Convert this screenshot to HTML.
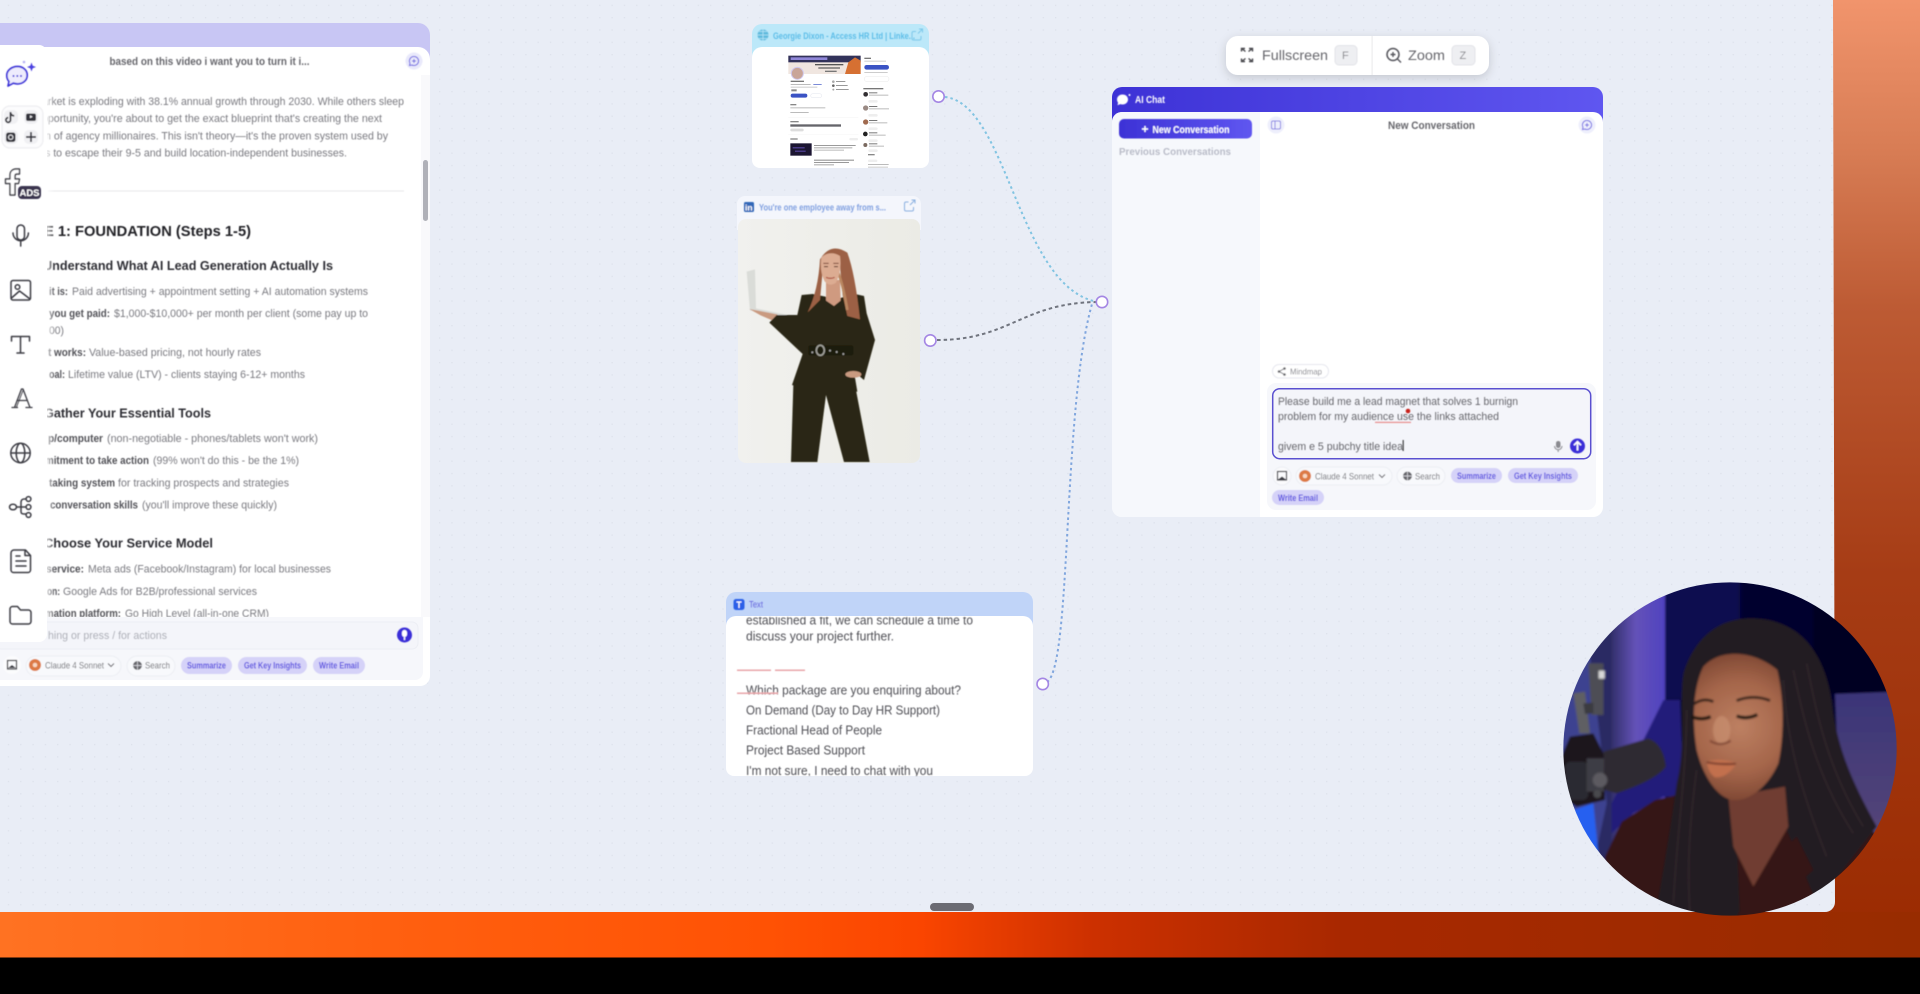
<!DOCTYPE html>
<html lang="en">
<head>
<meta charset="utf-8">
<title>AI Canvas</title>
<style>
html,body{margin:0;padding:0;background:#000;width:1920px;height:994px;overflow:hidden}
svg{display:block}
text{font-family:"Liberation Sans",sans-serif;white-space:pre}
.r{font-size:11px;fill:#7a7a80}
.b{font-size:11px;fill:#525258;font-weight:700}
.h{font-size:12.5px;fill:#2f2f34;font-weight:700}
.c{font-size:9px;fill:#6f6f75}
.p{font-size:9px;fill:#5a4fe0;font-weight:700}
.t{font-size:12.5px;fill:#4f4f55}
.i{font-size:11px;fill:#66666c}
.ic{fill:none;stroke:#3c3c44;stroke-width:1.5;stroke-linecap:round;stroke-linejoin:round}
.soft{filter:url(#s)}
</style>
</head>
<body>
<svg width="1920" height="994" viewBox="0 0 1920 994" xmlns="http://www.w3.org/2000/svg">
<defs>
<filter id="s" x="-5%" y="-5%" width="110%" height="110%"><feGaussianBlur stdDeviation="0.4"/></filter>
<filter id="s3" x="-20%" y="-20%" width="140%" height="140%"><feGaussianBlur stdDeviation="5"/></filter>
<filter id="s4" filterUnits="userSpaceOnUse" x="0" y="0" width="1140" height="1100"><feGaussianBlur stdDeviation="3"/></filter>
<filter id="s5" filterUnits="userSpaceOnUse" x="0" y="100" width="600" height="740"><feGaussianBlur stdDeviation="1.500"/></filter>
<filter id="sh" x="-10%" y="-30%" width="120%" height="170%"><feDropShadow dx="0" dy="3" stdDeviation="5" flood-color="#000" flood-opacity=".16"/></filter>
<pattern id="dots" x="7.8" y="4.7" width="12.32" height="12.32" patternUnits="userSpaceOnUse"><rect x="0" y="0" width="1.300" height="1.300" fill="#dde1eb"/></pattern>
<linearGradient id="side" x1="0" y1="0" x2="0" y2="1"><stop offset="0" stop-color="#f1946c"/><stop offset=".16" stop-color="#d77c54"/><stop offset=".32" stop-color="#bd5b34"/><stop offset=".6" stop-color="#a63c15"/><stop offset="1" stop-color="#9a2a00"/></linearGradient>
<linearGradient id="strip" x1="0" y1="0" x2="1920" y2="0" gradientUnits="userSpaceOnUse"><stop offset="0" stop-color="#ff7222"/><stop offset=".2" stop-color="#ff6010"/><stop offset=".4" stop-color="#ff5204"/><stop offset=".48" stop-color="#fa4500"/><stop offset=".57" stop-color="#cc3000"/><stop offset=".7" stop-color="#a82800"/><stop offset="1" stop-color="#982c00"/></linearGradient>
<linearGradient id="chat" x1="0" x2="1"><stop offset="0" stop-color="#3d32d6"/><stop offset="1" stop-color="#5f56f0"/></linearGradient>
<linearGradient id="fade" x1="0" x2="1"><stop offset="0" stop-color="#fff" stop-opacity=".7"/><stop offset="1" stop-color="#fff" stop-opacity="0"/></linearGradient>
<linearGradient id="wall" x1="0" x2="1"><stop offset="0" stop-color="#f1f1ee"/><stop offset="1" stop-color="#ebebe5"/></linearGradient>
<linearGradient id="panel" x1="0" x2="1"><stop offset="0" stop-color="#33306c"/><stop offset=".45" stop-color="#6452b8"/><stop offset="1" stop-color="#4f42c0"/></linearGradient>
<linearGradient id="wallr" x1="0" y1="0" x2="0" y2="1"><stop offset="0" stop-color="#3a3578"/><stop offset="1" stop-color="#564678"/></linearGradient>
<radialGradient id="face" gradientUnits="userSpaceOnUse" cx="600" cy="470" r="230"><stop offset="0" stop-color="#bd8062"/><stop offset=".6" stop-color="#a4654a"/><stop offset="1" stop-color="#7c4632"/></radialGradient>
<clipPath id="leftclip"><rect x="0" y="75" width="421" height="542"/></clipPath>
<clipPath id="textclip"><path d="M726 617h307v151a8 8 0 0 1-8 8H734a8 8 0 0 1-8-8z"/></clipPath>
<clipPath id="cam"><circle cx="570" cy="537" r="500"/></clipPath>
</defs>

<!-- backdrop -->
<rect width="1920" height="957" fill="url(#side)"/>
<rect x="0" y="912" width="1920" height="45.500" fill="url(#strip)"/>
<rect x="0" y="957.500" width="1920" height="37" fill="#000"/>
<!-- canvas -->
<path d="M0 0H1833L1835 902a10 10 0 0 1-10 10H0z" fill="#e9edf6"/>
<path d="M0 0H1833L1835 902a10 10 0 0 1-10 10H0z" fill="url(#dots)"/>
<rect x="930" y="903" width="44" height="8" rx="4" fill="#6b6b73"/>

<!-- left panel -->
<g>
<path d="M0 23H418a12 12 0 0 1 12 12V60H0z" fill="#c8c6f4"/>
<path d="M0 47H418a12 12 0 0 1 12 12V676a10 10 0 0 1-10 10H0z" fill="#fff"/>
<rect x="421" y="75" width="9" height="542" fill="#f9f9fb"/>
<rect x="423" y="160" width="5" height="61" rx="2.500" fill="#b0b1b8"/>
<g class="soft">
<text x="109.500" y="65" textLength="200" lengthAdjust="spacingAndGlyphs" style="font-size:11px;font-weight:700;fill:#66666c">based on this video i want you to turn it i...</text>
<circle cx="414" cy="61" r="8.500" fill="#e9e9fb"/>
<path d="M414 56.500a4.500 4.500 0 1 1-2 8.500l-2.500.5.500-2.300a4.500 4.500 0 0 1 4-6.700zM414 59v4M412 61h4" fill="none" stroke="#6a60e0" stroke-width="1"/>
<g clip-path="url(#leftclip)">
<text class="r" x="42" y="105" textLength="362" lengthAdjust="spacingAndGlyphs">arket is exploding with 38.1% annual growth through 2030. While others sleep</text>
<text class="r" x="36" y="122" textLength="346" lengthAdjust="spacingAndGlyphs">opportunity, you're about to get the exact blueprint that's creating the next</text>
<text class="r" x="45" y="139.500" textLength="343" lengthAdjust="spacingAndGlyphs">n of agency millionaires. This isn't theory—it's the proven system used by</text>
<text class="r" x="45" y="156.500" textLength="302" lengthAdjust="spacingAndGlyphs">s to escape their 9-5 and build location-independent businesses.</text>
<rect x="48" y="190.500" width="356" height="1" fill="#e6e6e9"/>
<text x="44" y="236" textLength="207" lengthAdjust="spacingAndGlyphs" style="font-size:14.500px;font-weight:700;fill:#222227">E 1: FOUNDATION (Steps 1-5)</text>
<text class="h" x="43" y="270" textLength="290" lengthAdjust="spacingAndGlyphs">Understand What AI Lead Generation Actually Is</text>

<text class="b" x="49" y="295" textLength="19" lengthAdjust="spacingAndGlyphs">it is:</text>
<text class="r" x="72" y="295" textLength="296" lengthAdjust="spacingAndGlyphs">Paid advertising + appointment setting + AI automation systems</text>
<text class="b" x="49" y="317" textLength="61" lengthAdjust="spacingAndGlyphs">you get paid:</text>
<text class="r" x="114" y="317" textLength="254" lengthAdjust="spacingAndGlyphs">$1,000-$10,000+ per month per client (some pay up to</text>
<text class="r" x="49" y="334" textLength="15" lengthAdjust="spacingAndGlyphs">00)</text>
<text class="b" x="48" y="356" textLength="38" lengthAdjust="spacingAndGlyphs">t works:</text>
<text class="r" x="89" y="356" textLength="172" lengthAdjust="spacingAndGlyphs">Value-based pricing, not hourly rates</text>
<text class="b" x="49" y="378" textLength="16" lengthAdjust="spacingAndGlyphs">oal:</text>
<text class="r" x="68" y="378" textLength="237" lengthAdjust="spacingAndGlyphs">Lifetime value (LTV) - clients staying 6-12+ months</text>

<text class="h" x="44" y="417.500" textLength="167" lengthAdjust="spacingAndGlyphs">Gather Your Essential Tools</text>
<text class="b" x="48" y="442" textLength="55" lengthAdjust="spacingAndGlyphs">p/computer</text>
<text class="r" x="107" y="442" textLength="211" lengthAdjust="spacingAndGlyphs">(non-negotiable - phones/tablets won't work)</text>
<text class="b" x="45" y="464" textLength="104" lengthAdjust="spacingAndGlyphs">mitment to take action</text>
<text class="r" x="153" y="464" textLength="146" lengthAdjust="spacingAndGlyphs">(99% won't do this - be the 1%)</text>
<text class="b" x="49" y="486.500" textLength="66" lengthAdjust="spacingAndGlyphs">taking system</text>
<text class="r" x="118" y="486.500" textLength="171" lengthAdjust="spacingAndGlyphs">for tracking prospects and strategies</text>
<text class="b" x="50" y="508.500" textLength="88" lengthAdjust="spacingAndGlyphs">conversation skills</text>
<text class="r" x="142" y="508.500" textLength="135" lengthAdjust="spacingAndGlyphs">(you'll improve these quickly)</text>

<text class="h" x="44" y="547.500" textLength="169" lengthAdjust="spacingAndGlyphs">Choose Your Service Model</text>
<text class="b" x="46" y="572.500" textLength="38" lengthAdjust="spacingAndGlyphs">service:</text>
<text class="r" x="88" y="572.500" textLength="243" lengthAdjust="spacingAndGlyphs">Meta ads (Facebook/Instagram) for local businesses</text>
<text class="b" x="47" y="595" textLength="13" lengthAdjust="spacingAndGlyphs">on:</text>
<text class="r" x="63" y="595" textLength="194" lengthAdjust="spacingAndGlyphs">Google Ads for B2B/professional services</text>
<text class="b" x="45" y="617" textLength="76" lengthAdjust="spacingAndGlyphs">mation platform:</text>
<text class="r" x="125" y="617" textLength="144" lengthAdjust="spacingAndGlyphs">Go High Level (all-in-one CRM)</text>
</g>
</g>
<!-- left composer -->
<path d="M0 617H423V672a8 8 0 0 1-8 8H0z" fill="#f6f7fb"/>
<rect x="-5" y="622" width="423" height="27" rx="6" fill="#f4f5fa" stroke="#eceef4"/>
<g class="soft">
<text x="48" y="639" textLength="119" lengthAdjust="spacingAndGlyphs" style="font-size:11px;fill:#aeb0b8">hing or press / for actions</text>
<circle cx="404.500" cy="635" r="7.500" fill="#3a2fd8"/>
<rect x="402" y="630" width="5" height="7" rx="2.500" fill="#fff"/>
<path d="M404.500 637v3" stroke="#fff" stroke-width="1.400"/>
<circle cx="12" cy="665" r="9" fill="#fff" opacity=".6"/>
<rect x="7.500" y="660.500" width="9" height="8.500" fill="none" stroke="#3c3c44" stroke-width="1.200"/>
<path d="M8 668l4-3 4 3z" fill="#3c3c44"/>
<rect x="26" y="656" width="95" height="20" rx="10" fill="#f8f9fc" stroke="#eceef3"/>
<circle cx="35" cy="665" r="6" fill="#dd7a45"/><circle cx="35" cy="665" r="2.300" fill="#f7d7c2"/>
<text class="c" x="45" y="668.500" textLength="59" lengthAdjust="spacingAndGlyphs">Claude 4 Sonnet</text>
<path d="M108 663.500l3 3 3-3" fill="none" stroke="#66666c" stroke-width="1.100"/>
<rect x="127" y="656" width="48" height="20" rx="10" fill="#f8f9fc" stroke="#eceef3"/>
<circle cx="137.500" cy="665.500" r="4.500" fill="#66666c"/>
<path d="M133 665.500h9M137.500 661v9" stroke="#e8e8ee" stroke-width=".7"/>
<text class="c" x="145" y="668.500" textLength="25" lengthAdjust="spacingAndGlyphs">Search</text>
<rect x="181" y="657" width="51" height="17" rx="8.500" fill="#d5d2f8"/>
<text class="p" x="187" y="668.500" textLength="39" lengthAdjust="spacingAndGlyphs">Summarize</text>
<rect x="238" y="657" width="69" height="17" rx="8.500" fill="#d5d2f8"/>
<text class="p" x="244" y="668.500" textLength="57" lengthAdjust="spacingAndGlyphs">Get Key Insights</text>
<rect x="313" y="657" width="52" height="17" rx="8.500" fill="#d5d2f8"/>
<text class="p" x="319" y="668.500" textLength="40" lengthAdjust="spacingAndGlyphs">Write Email</text>
</g>
</g>

<!-- left toolbar -->
<g>
<rect x="47" y="47" width="8" height="570" fill="url(#fade)"/>
<path d="M0 45H39a8 8 0 0 1 8 8V634a8 8 0 0 1-8 8H0z" fill="#fff"/>
<g class="soft">
<path d="M17.500 66.500c5.500 0 9.700 3.700 9.700 8.700s-4.200 8.700-9.700 8.700c-1.500 0-2.900-.3-4.200-.8L8 86l1-4.500c-1.400-1.600-2.200-3.700-2.200-6.100 0-5 5-8.900 10.700-8.900z" fill="#eeecfd" stroke="#3b30d8" stroke-width="1.700" stroke-linejoin="round"/>
<circle cx="13.500" cy="76" r="1" fill="#3b30d8"/><circle cx="17.300" cy="76" r="1" fill="#3b30d8"/><circle cx="21" cy="76" r="1" fill="#3b30d8"/>
<path d="M31.500 62.500l1.200 3.300 3.300 1.200-3.300 1.200-1.200 3.300-1.200-3.300-3.300-1.200 3.300-1.200z" fill="#4a3fe0"/>
<circle cx="24" cy="62" r="1.300" fill="#b8b2f4"/>

<rect x="2" y="106" width="41" height="42" rx="8" fill="#fcfcfd" stroke="#eeeef1" stroke-width="1.200"/>
<rect x="4" y="110" width="14" height="14" rx="5" fill="#f0f0f3"/>
<rect x="24" y="110" width="14" height="14" rx="5" fill="#f0f0f3"/>
<rect x="4" y="130" width="14" height="14" rx="5" fill="#f0f0f3"/>
<rect x="24" y="130" width="14" height="14" rx="5" fill="#f0f0f3"/>
<path d="M10.500 112v8a2.300 2.300 0 1 1-2.300-2.300M10.500 112.500c.3 2 1.700 3.200 3.700 3.400" fill="none" stroke="#34343c" stroke-width="1.800"/>
<rect x="26" y="113.500" width="10" height="7.500" rx="2" fill="#34343c"/><path d="M30 115.300l2.700 1.500-2.700 1.500z" fill="#f0f0f3"/>
<rect x="6" y="132.500" width="9.500" height="9.500" rx="2.500" fill="#34343c"/><circle cx="10.700" cy="137.200" r="2.200" fill="none" stroke="#f0f0f3" stroke-width="1"/>
<path d="M26 137h10M31 132v10" stroke="#34343c" stroke-width="1.700"/>

<path d="M19.500 169h-3.500c-3.500 0-6 2.500-6 6v4H5.500v4.500H10V195h5v-11.500h3.500l1-4.500H15v-3c0-1.200.8-2 2-2h2.500z" fill="#fff" stroke="#3c3c44" stroke-width="1.400" stroke-linejoin="round"/>
<rect x="18" y="186" width="23" height="13" rx="4" fill="#3a3450"/>
<text x="19.500" y="196" textLength="20" lengthAdjust="spacingAndGlyphs" style="font-size:9px;font-weight:700;fill:#fff">ADS</text>

<rect x="17" y="225" width="7.500" height="15" rx="3.700" class="ic"/>
<path d="M13 233a7.700 7.700 0 0 0 15.400 0M20.700 241v5" class="ic"/>

<rect x="11" y="280.500" width="19.500" height="19.500" rx="2" class="ic"/>
<circle cx="17.500" cy="287" r="2.300" class="ic"/>
<path d="M11.500 298l8-7 4 3 6.500 5" class="ic"/>

<path d="M11.500 341v-4.500h18v4.500M20.500 336.500V353M17 353h7" class="ic"/>

<path d="M12 407.500h5.500M26 407.500h6M14.500 407.500L21.500 389h1.500l7 18.500M17 400.500h10" class="ic" style="stroke-width:1.300"/>
<path d="M23 390.500l-6.500 16.500" class="ic" style="stroke-width:.9"/>

<circle cx="20.500" cy="453" r="9.700" class="ic"/>
<ellipse cx="20.500" cy="453" rx="4.300" ry="9.700" class="ic"/>
<path d="M11 453h19" class="ic"/>

<ellipse cx="13" cy="507" rx="3.500" ry="2.800" class="ic"/>
<circle cx="28.500" cy="499" r="2.400" class="ic"/><circle cx="28.500" cy="507" r="2.400" class="ic"/><circle cx="28.500" cy="515" r="2.400" class="ic"/>
<path d="M16.500 507h9.500M26 499h-2c-2 0-3 1.500-3 3.500v9c0 2 1 2.500 3 2.500h2" class="ic"/>

<path d="M11 553a3 3 0 0 1 3-3h11.500l5 5.500V570a2.500 2.500 0 0 1-2.500 2.500H13.500A2.500 2.500 0 0 1 11 570zM25 550.500v5h5M16 561h10M16 566h10M16 556h4" class="ic"/>

<path d="M10 609a2.500 2.500 0 0 1 2.500-2.500h5l3 3.500h8a2.500 2.500 0 0 1 2.500 2.500v9a2.500 2.500 0 0 1-2.500 2.500h-16a2.500 2.500 0 0 1-2.500-2.500z" class="ic"/>
</g>
</g>

<!-- connectors -->
<g fill="none">
<path d="M945 97C1008 104 1018 288 1098 302" stroke="#82c4e2" stroke-width="2" stroke-dasharray="2.500 3"/>
<path d="M937 340C1010 340 1022 303 1097 302" stroke="#70747e" stroke-width="2" stroke-dasharray="3.500 3"/>
<path d="M1047 682C1072 666 1062 410 1092 304" stroke="#80a6de" stroke-width="2" stroke-dasharray="2.500 3"/>
<g fill="#fff" stroke="#a486e4" stroke-width="1.600">
<circle cx="938.500" cy="96.500" r="5.700"/>
<circle cx="930.300" cy="340.500" r="5.700"/>
<circle cx="1102" cy="302" r="5.700"/>
<circle cx="1042.700" cy="684" r="5.700"/>
</g>
</g>

<!-- node 1 -->
<g>
<path d="M752 34a10 10 0 0 1 10-10H919a10 10 0 0 1 10 10V60H752z" fill="#bce8f9"/>
<path d="M752 57a10 10 0 0 1 10-10H919a10 10 0 0 1 10 10V160a8 8 0 0 1-8 8H760a8 8 0 0 1-8-8z" fill="#fff"/>
<g class="soft">
<circle cx="763" cy="35" r="5.500" fill="#5fbadd"/>
<path d="M757.500 35h11M763 29.500v11M759 31.500h8M759 38.500h8" stroke="#bce8f9" stroke-width=".7"/>
<text x="773" y="39" textLength="142" lengthAdjust="spacingAndGlyphs" style="font-size:9.500px;font-weight:700;fill:#5cbde8">Georgie Dixon - Access HR Ltd | Linke...</text>
<path d="M916 31.500h-2.500a1.500 1.500 0 0 0-1.500 1.500v5.500a1.500 1.500 0 0 0 1.500 1.500h6a1.500 1.500 0 0 0 1.500-1.500V36M918 33.500l4.500-4.500M919 29h3.500v3.500" fill="none" stroke="#7dc8ea" stroke-width="1"/>
</g>
<g transform="translate(720,10) scale(.33333)" class="soft">
<rect x="205" y="137" width="217" height="55" fill="#f0e6e0"/>
<rect x="205" y="137" width="217" height="20" fill="#33335a"/>
<rect x="212" y="142" width="110" height="8" fill="#8f86d8"/>
<path d="M375 192l10-35 20-15 17 10v40z" fill="#d67030"/>
<rect x="285" y="162" width="85" height="4" fill="#555"/><rect x="295" y="172" width="65" height="4" fill="#666"/><rect x="315" y="182" width="35" height="4" fill="#777"/>
<circle cx="232" cy="190" r="18" fill="#c9a598" stroke="#cfc8ee" stroke-width="3"/>
<rect x="212" y="212" width="40" height="4" fill="#777"/>
<rect x="212" y="222" width="60" height="3" fill="#bbb"/><rect x="280" y="222" width="25" height="3" fill="#7a8ad8"/>
<rect x="212" y="230" width="80" height="3" fill="#ccc"/>
<rect x="214" y="238" width="16" height="6" fill="#888"/>
<rect x="212" y="251" width="50" height="12" rx="6" fill="#3a52c4"/>
<rect x="272" y="251" width="33" height="12" rx="6" fill="#fff" stroke="#d3d6e4"/>
<circle cx="340" cy="215" r="4" fill="#aaa"/><rect x="348" y="213" width="28" height="3" fill="#999"/>
<circle cx="340" cy="227" r="4" fill="#666"/><rect x="348" y="225" width="35" height="3" fill="#999"/>
<circle cx="340" cy="239" r="3" fill="#aaa"/><rect x="348" y="237" width="38" height="3" fill="#999"/>
<rect x="211" y="282" width="18" height="4" fill="#888"/>
<rect x="211" y="292" width="105" height="3" fill="#bbb"/><rect x="211" y="306" width="55" height="3" fill="#bbb"/>
<rect x="205" y="322" width="210" height="1" fill="#eee"/>
<rect x="211" y="333" width="25" height="4" fill="#888"/>
<rect x="211" y="343" width="152" height="7" fill="#65656a"/>
<rect x="211" y="356" width="40" height="8" rx="4" fill="#ddd"/>
<rect x="205" y="374" width="210" height="1" fill="#eee"/>
<rect x="211" y="385" width="22" height="4" fill="#888"/>
<rect x="388" y="384" width="26" height="7" rx="3" fill="#eee"/>
<rect x="211" y="400" width="64" height="37" fill="#1b1533"/>
<rect x="218" y="412" width="36" height="3" fill="#6050b0"/><rect x="225" y="422" width="32" height="3" fill="#6050b0"/>
<rect x="282" y="405" width="125" height="3" fill="#9a9a9a"/><rect x="282" y="412" width="115" height="3" fill="#aaa"/><rect x="282" y="419" width="90" height="3" fill="#bbb"/>
<rect x="282" y="449" width="120" height="3" fill="#888"/><rect x="282" y="456" width="105" height="3" fill="#999"/><rect x="282" y="463" width="60" height="3" fill="#aaa"/>
<rect x="433" y="143" width="20" height="4" fill="#777"/>
<rect x="433" y="152" width="65" height="3" fill="#ccc"/>
<rect x="433" y="165" width="74" height="14" rx="7" fill="#3a52c4"/>
<rect x="433" y="186" width="70" height="3" fill="#ccc"/>
<rect x="433" y="199" width="74" height="16" rx="8" fill="#fff" stroke="#ddd"/>
<rect x="430" y="234" width="60" height="4" fill="#777"/>
<circle cx="437" cy="253" r="7" fill="#332e30"/><rect x="447" y="247" width="25" height="3" fill="#777"/><rect x="447" y="254" width="58" height="3" fill="#bbb"/><rect x="445" y="270" width="28" height="8" rx="4" fill="#eee"/>
<circle cx="437" cy="294" r="8" fill="#9a8a84"/><rect x="447" y="288" width="25" height="3" fill="#777"/><rect x="447" y="295" width="60" height="3" fill="#bbb"/><rect x="445" y="312" width="28" height="8" rx="4" fill="#eee"/>
<circle cx="437" cy="336" r="8" fill="#a06a50"/><rect x="447" y="330" width="25" height="3" fill="#777"/><rect x="447" y="337" width="55" height="3" fill="#bbb"/><rect x="445" y="352" width="28" height="8" rx="4" fill="#eee"/>
<circle cx="436" cy="372" r="7" fill="#222"/><rect x="447" y="367" width="25" height="3" fill="#777"/><rect x="447" y="374" width="50" height="3" fill="#bbb"/><rect x="445" y="388" width="28" height="8" rx="4" fill="#eee"/>
<circle cx="436" cy="405" r="6" fill="#7a6a60"/><rect x="447" y="400" width="25" height="3" fill="#777"/><rect x="447" y="407" width="45" height="3" fill="#bbb"/><rect x="445" y="418" width="28" height="8" rx="4" fill="#eee"/>
<rect x="444" y="432" width="20" height="4" fill="#888"/><rect x="444" y="449" width="28" height="7" rx="3" fill="#eee"/><rect x="444" y="462" width="62" height="3" fill="#bbb"/><rect x="444" y="470" width="60" height="3" fill="#ccc"/>
</g>
</g>

<!-- node 2 -->
<g>
<path d="M737 204a8 8 0 0 1 8-8H913a8 8 0 0 1 8 8V230H737z" fill="#f4f6fc"/>
<path d="M738 227a8 8 0 0 1 8-8H912a8 8 0 0 1 8 8V455a8 8 0 0 1-8 8H746a8 8 0 0 1-8-8z" fill="url(#wall)"/>
<g class="soft">
<rect x="744" y="202" width="10" height="10" rx="1.500" fill="#3268b8"/>
<text x="745" y="210.700" style="font-size:8.500px;font-weight:700;fill:#fff">in</text>
<text x="759" y="210.500" textLength="127" lengthAdjust="spacingAndGlyphs" style="font-size:9.500px;font-weight:700;fill:#7f9fe0">You're one employee away from s...</text>
<path d="M908.500 202h-2.500a1.500 1.500 0 0 0-1.500 1.500v6a1.500 1.500 0 0 0 1.500 1.500h6a1.500 1.500 0 0 0 1.500-1.500V207M910 205l5-5M911.500 200h3.500v3.500" fill="none" stroke="#8ab0e0" stroke-width="1"/>
</g>
<g transform="translate(740,200) scale(.33333)">
<g filter="url(#s5)">
<path d="M20 215L45 208 48 325 165 350 160 356 30 331Z" fill="#dadcd8"/>
<path d="M28 327L112 343 108 366 62 346Z" fill="#c99a80"/>
<path d="M160 555L153 786H232L258 585 312 786H389L345 555Z" fill="#2a2612"/>
<path d="M185 285L218 282 290 297 345 282 372 288 380 340 405 420 372 540 342 515 352 575 255 578 156 555 188 462 88 368 110 345 172 345Z" fill="#2c2713"/>
<path d="M258 240L300 240 302 302 282 318 258 302Z" fill="#cf9a80"/>
<path d="M240 178Q272 125 322 158Q345 220 360 358L322 348 308 285 300 200 250 190 240 300 203 337Q235 270 240 178Z" fill="#9c6144"/>
<path d="M268 170Q300 200 322 330" stroke="#b98660" stroke-width="8" fill="none"/>
<path d="M244 172Q270 150 300 168Q306 215 288 248Q270 262 254 244Q238 215 244 172Z" fill="#dcac92"/>
<path d="M250 190h16M280 190h16" stroke="#7a4a38" stroke-width="3"/>
<path d="M252 200h12M282 200h12" stroke="#5a3428" stroke-width="3"/>
<path d="M258 232q14 6 26 0" stroke="#b05a4a" stroke-width="4" fill="none"/>
<rect x="205" y="436" width="135" height="30" rx="6" fill="#1e1a0c"/>
<ellipse cx="241" cy="451" rx="12" ry="15" fill="none" stroke="#a0a09a" stroke-width="5"/>
<circle cx="270" cy="452" r="3" fill="#aaa"/><circle cx="290" cy="456" r="3" fill="#aaa"/><circle cx="310" cy="462" r="3" fill="#aaa"/><circle cx="217" cy="457" r="3" fill="#aaa"/>
<ellipse cx="340" cy="523" rx="24" ry="10" fill="#c99a80"/>
</g>
</g>
</g>

<!-- node 3 -->
<g>
<path d="M726 602a10 10 0 0 1 10-10H1023a10 10 0 0 1 10 10V630H726z" fill="#c0d4f8"/>
<path d="M726 626a10 10 0 0 1 10-10H1023a10 10 0 0 1 10 10V768a8 8 0 0 1-8 8H734a8 8 0 0 1-8-8z" fill="#fff"/>
<g class="soft">
<rect x="733.500" y="599" width="11" height="11" rx="2.500" fill="#2c5fe8"/>
<path d="M736.500 602h5M739 602v6" stroke="#fff" stroke-width="1.300"/>
<text x="749" y="607.500" textLength="14" lengthAdjust="spacingAndGlyphs" style="font-size:9.500px;fill:#6464dc">Text</text>
<g clip-path="url(#textclip)">
<text class="t" x="746" y="624.500" textLength="227" lengthAdjust="spacingAndGlyphs">established a fit, we can schedule a time to</text>
<text class="t" x="746" y="640.500" textLength="148" lengthAdjust="spacingAndGlyphs">discuss your project further.</text>
<rect x="737" y="669.500" width="34" height="1.500" fill="#e8a4a8"/>
<rect x="775" y="669.500" width="30" height="1.500" fill="#e8a4a8"/>
<text class="t" x="746" y="694.500" textLength="215" lengthAdjust="spacingAndGlyphs">Which package are you enquiring about?</text>
<rect x="737" y="692.500" width="41" height="1.500" fill="#e8a4a8"/>
<text class="t" x="746" y="714.500" textLength="194" lengthAdjust="spacingAndGlyphs">On Demand (Day to Day HR Support)</text>
<text class="t" x="746" y="734.500" textLength="136" lengthAdjust="spacingAndGlyphs">Fractional Head of People</text>
<text class="t" x="746" y="754.500" textLength="119" lengthAdjust="spacingAndGlyphs">Project Based Support</text>
<text class="t" x="746" y="775" textLength="187" lengthAdjust="spacingAndGlyphs">I'm not sure, I need to chat with you</text>
</g>
</g>
</g>

<!-- fullscreen bar -->
<g>
<rect x="1226" y="36" width="263" height="39" rx="12" fill="#fff" filter="url(#sh)"/>
<rect x="1371.500" y="36" width="1.200" height="39" fill="#ececee"/>
<g class="soft">
<path d="M1245.500 51.500L1241.500 48.500M1241.500 51.500v-3h3.500M1248.500 51.500l4-3M1249 48.500h3.500v3M1245.500 58.500l-4 3M1241.500 58.500v3h3.500M1248.500 58.500l4 3M1252.500 58.500v3H1249" fill="none" stroke="#48484e" stroke-width="1.400"/>
<text x="1262" y="60" textLength="66" lengthAdjust="spacingAndGlyphs" style="font-size:14px;fill:#66666c">Fullscreen</text>
<rect x="1335" y="45.500" width="22" height="19.500" rx="4" fill="#eeeff2" stroke="#e2e3e8"/>
<text x="1342" y="59" style="font-size:11px;fill:#86868c">F</text>
<circle cx="1393" cy="54.500" r="6" fill="none" stroke="#55555c" stroke-width="1.500"/>
<path d="M1397.500 59l3.500 3.500M1390.500 54.500h5M1393 52v5" stroke="#55555c" stroke-width="1.400"/>
<text x="1408" y="60" textLength="37" lengthAdjust="spacingAndGlyphs" style="font-size:14px;fill:#66666c">Zoom</text>
<rect x="1452" y="45.500" width="23" height="19.500" rx="4" fill="#eeeff2" stroke="#e2e3e8"/>
<text x="1459.500" y="59" style="font-size:11px;fill:#86868c">Z</text>
</g>
</g>

<!-- AI Chat -->
<g>
<path d="M1112 97a10 10 0 0 1 10-10H1593a10 10 0 0 1 10 10V125H1112z" fill="url(#chat)"/>
<path d="M1112 122a10 10 0 0 1 10-10H1593a10 10 0 0 1 10 10V507a10 10 0 0 1-10 10H1122a10 10 0 0 1-10-10z" fill="#fff"/>
<path d="M1112 122a10 10 0 0 1 10-10H1260V517H1122a10 10 0 0 1-10-10z" fill="#f6f8fc"/>
<g class="soft">
<path d="M1122.500 94.500c3.500 0 5.500 2.300 5.500 5s-2.200 5-5.500 5c-.8 0-1.500-.1-2.200-.4l-2.800 1.200.6-2.800c-.8-.8-1.100-1.900-1.100-3 0-2.700 2.200-5 5.500-5z" fill="#fff"/>
<circle cx="1129.500" cy="95" r="1" fill="#fff"/>
<text x="1135" y="103" textLength="30" lengthAdjust="spacingAndGlyphs" style="font-size:10.500px;font-weight:700;fill:#fff">AI Chat</text>
<rect x="1119" y="119" width="133" height="19.500" rx="5" fill="url(#chat)"/>
<path d="M1142 129h6M1145 126v6" stroke="#fff" stroke-width="1.400"/>
<text x="1152.500" y="132.800" textLength="77" lengthAdjust="spacingAndGlyphs" style="font-size:10.500px;font-weight:700;fill:#fff">New Conversation</text>
<text x="1119" y="155" textLength="112" lengthAdjust="spacingAndGlyphs" style="font-size:10.500px;font-weight:700;fill:#b9bcc8">Previous Conversations</text>
<circle cx="1276" cy="125" r="8.500" fill="#eeeffc"/>
<rect x="1271.500" y="121" width="9" height="8" rx="1.500" fill="none" stroke="#8a84e4" stroke-width="1"/>
<path d="M1275 121v8" stroke="#8a84e4" stroke-width="1"/>
<text x="1388" y="129" textLength="87" lengthAdjust="spacingAndGlyphs" style="font-size:11px;font-weight:700;fill:#66666c">New Conversation</text>
<circle cx="1587" cy="125" r="8.500" fill="#eeeffc"/>
<path d="M1587 120.500a4.500 4.500 0 1 1-2 8.500l-2.500.5.500-2.300a4.500 4.500 0 0 1 4-6.700zM1587 123v4M1585 125h4" fill="none" stroke="#7068e2" stroke-width="1"/>

<rect x="1272.500" y="364.500" width="56" height="13.500" rx="6.700" fill="#fff" stroke="#e6e7ee"/>
<circle cx="1279" cy="371.500" r="1.300" fill="#66666c"/><circle cx="1284.500" cy="368.500" r="1.300" fill="#66666c"/><circle cx="1284.500" cy="374.500" r="1.300" fill="#66666c"/>
<path d="M1279 371.500l5.500-3M1279 371.500l5.500 3" stroke="#66666c" stroke-width=".8"/>
<text x="1290" y="374.300" textLength="32" lengthAdjust="spacingAndGlyphs" style="font-size:8.500px;fill:#85858c">Mindmap</text>
</g>
<rect x="1267" y="383" width="329" height="127" rx="9" fill="#f6f7fb"/>
<rect x="1272.700" y="388.700" width="318" height="70" rx="7" fill="#f4f5fa" stroke="#5a50d0" stroke-width="1.500"/>
<g class="soft">
<text class="i" x="1278" y="405" textLength="240" lengthAdjust="spacingAndGlyphs">Please build me a lead magnet that solves 1 burnign</text>
<text class="i" x="1278" y="420" textLength="221" lengthAdjust="spacingAndGlyphs">problem for my audience use the links attached</text>
<rect x="1375" y="421.800" width="36" height="1.200" fill="#e88c8c"/>
<circle cx="1408" cy="411" r="2.300" fill="#c8201c"/>
<text class="i" x="1278" y="450" textLength="125" lengthAdjust="spacingAndGlyphs">givem e 5 pubchy title idea</text>
<rect x="1402.700" y="440" width="1" height="11" fill="#222"/>
<rect x="1556" y="441" width="4.500" height="7" rx="2.200" fill="#8a8a90"/>
<path d="M1554.500 446a3.700 3.700 0 0 0 7.500 0M1558.200 450v2" fill="none" stroke="#8a8a90" stroke-width="1"/>
<circle cx="1577.500" cy="446" r="7.500" fill="#3a2fd8"/>
<path d="M1577.500 450.500v-8.500M1574 445.200l3.500-3.500 3.500 3.500" fill="none" stroke="#fff" stroke-width="1.700"/>

<circle cx="1282" cy="476" r="9" fill="#fbfbfd" stroke="#eceef3"/>
<rect x="1277.500" y="471.500" width="9" height="8.500" fill="none" stroke="#3c3c44" stroke-width="1.200"/>
<path d="M1278 479.500l4-3 4 3z" fill="#3c3c44"/>
<rect x="1296" y="467" width="96" height="18" rx="9" fill="#f8f9fc" stroke="#eceef3"/>
<circle cx="1305" cy="476" r="6" fill="#dd7a45"/><circle cx="1305" cy="476" r="2.300" fill="#f7d7c2"/>
<text class="c" x="1315" y="479.300" textLength="59" lengthAdjust="spacingAndGlyphs">Claude 4 Sonnet</text>
<path d="M1379 474.500l3 3 3-3" fill="none" stroke="#66666c" stroke-width="1.100"/>
<rect x="1397" y="467" width="48" height="18" rx="9" fill="#f8f9fc" stroke="#eceef3"/>
<circle cx="1407.500" cy="476" r="4.500" fill="#66666c"/>
<path d="M1403 476h9M1407.500 471.500v9" stroke="#e8e8ee" stroke-width=".7"/>
<text class="c" x="1415" y="479.300" textLength="25" lengthAdjust="spacingAndGlyphs">Search</text>
<rect x="1451" y="468" width="51" height="15" rx="7.500" fill="#d5d2f8"/>
<text class="p" x="1457" y="478.800" textLength="39" lengthAdjust="spacingAndGlyphs">Summarize</text>
<rect x="1508" y="468" width="70" height="15" rx="7.500" fill="#d5d2f8"/>
<text class="p" x="1514" y="478.800" textLength="58" lengthAdjust="spacingAndGlyphs">Get Key Insights</text>
<rect x="1272" y="490" width="52" height="15" rx="7.500" fill="#d5d2f8"/>
<text class="p" x="1278" y="500.800" textLength="40" lengthAdjust="spacingAndGlyphs">Write Email</text>
</g>
</g>

<!-- webcam -->
<g transform="translate(1540,570) scale(.33333)">
<g clip-path="url(#cam)">
<g filter="url(#s4)">
<rect x="60" y="30" width="1020" height="1020" fill="#06042f"/>
<rect x="370" y="30" width="230" height="360" fill="#0a0a50" filter="url(#s3)"/>
<rect x="820" y="30" width="260" height="340" fill="#030220"/>
<rect x="60" y="60" width="160" height="900" fill="#2a2a64"/>
<rect x="215" y="60" width="160" height="820" fill="url(#panel)"/>
<path d="M370 390H420L430 680H370L280 730 215 790V700Z" fill="#231f7a"/>
<path d="M60 280L150 260 180 500 200 700 165 860 60 800Z" fill="#3e4290"/>
<path d="M100 720L160 700 175 850 120 800Z" fill="#2560f0"/>
<path d="M885 372L1075 365V810H905Z" fill="url(#wallr)"/>
<!-- mic arm -->
<path d="M145 280H190V435H155Z" fill="#4e4e54"/>
<rect x="176" y="302" width="18" height="24" fill="#d8d8d8"/>
<path d="M100 370L135 365 150 490H118Z" fill="#5e5e64"/>
<path d="M130 400L160 398 160 430 135 432Z" fill="#3a3a40"/>
<path d="M60 570L90 500 160 490 195 560 195 690 110 710 60 680Z" fill="#1a181c"/>
<rect x="75" y="575" width="70" height="115" rx="18" fill="#2c2a30"/>
<path d="M190 545L325 505Q370 520 378 590 350 630 230 670L195 660Z" fill="#2f2932"/>
<rect x="140" y="565" width="52" height="100" fill="#3e3c44"/>
<circle cx="180" cy="630" r="22" fill="#5c5a60"/>
<circle cx="172" cy="672" r="12" fill="#4a484e"/>
<!-- shirt -->
<path d="M195 860L245 755 345 690 430 670 760 690 1010 790 1000 1060H200Z" fill="#361815"/>
<!-- hair back -->
<path d="M630 145C530 145 460 210 430 310 415 400 440 520 410 640 390 780 370 900 345 1040H600L590 780 740 780 830 1000 1010 770C950 660 900 560 880 430 870 320 830 200 720 160 690 148 660 145 630 145Z" fill="#241a22"/>
<g stroke="#3f3038" stroke-width="4" fill="none" opacity=".6">
<path d="M760 300C790 450 830 620 940 790"/><path d="M800 280C830 430 860 590 970 770"/><path d="M730 330C740 520 790 680 860 860"/><path d="M440 420C440 600 410 800 400 1000"/><path d="M470 600C450 750 440 880 450 1030"/>
</g>
<!-- neck & chest -->
<path d="M565 680L735 650 745 770 640 950 580 830Z" fill="#6f3c30"/>
<path d="M640 950L690 880 770 800 820 900 660 1040H590Z" fill="#361815"/>
<!-- face -->
<path d="M490 290C540 235 640 240 712 300 735 400 730 510 715 580 680 660 620 695 575 690 530 680 490 620 470 540 455 450 460 350 490 290Z" fill="url(#face)"/>
<ellipse cx="545" cy="480" rx="26" ry="42" fill="#c99070" opacity=".7"/>
<path d="M510 512Q540 532 572 512" stroke="#7a4230" stroke-width="6" fill="none"/>
<path d="M462 402Q490 382 520 395M590 392Q640 372 690 392" stroke="#2a1a16" stroke-width="8" fill="none"/>
<path d="M455 440Q485 452 512 440M590 438Q620 450 652 434" stroke="#1e1210" stroke-width="10" fill="none"/>
<path d="M500 575Q540 562 590 580 560 625 525 622 505 610 500 575Z" fill="#c2704e"/>
<path d="M500 577Q545 585 588 581" stroke="#5e2c22" stroke-width="5" fill="none"/>
</g>
</g>
</g>
</svg>
</body>
</html>
